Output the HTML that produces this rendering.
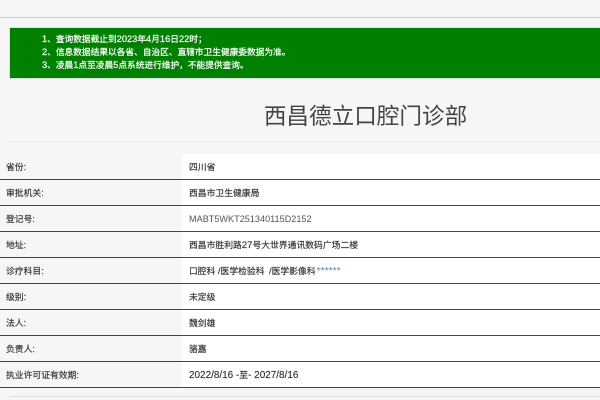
<!DOCTYPE html>
<html lang="zh">
<head>
<meta charset="utf-8">
<style>
html,body{margin:0;padding:0;width:600px;height:400px;overflow:hidden;background:#f6f6f6;}
body{position:relative;font-family:"Liberation Sans","Noto Sans CJK SC",sans-serif;color:#333;}
.abs{position:absolute;}
#top{left:0;top:17px;width:600px;height:1px;background:#ccc;}
#notice{left:9px;top:27px;width:591px;height:52px;box-sizing:border-box;background:#008000;border:1px solid #ddd;border-right:0;color:#fff;font-size:8.7px;-webkit-text-stroke:.2px #fff;}
#notice div{position:absolute;left:32px;white-space:nowrap;line-height:13px;}
#notice i{font-style:normal;font-size:9.3px;}
#title{left:0;top:100px;width:731px;text-align:center;font-size:22.6px;line-height:33px;color:#444;white-space:nowrap;}
#hr1{left:9px;top:141px;width:591px;height:1px;background:#eee;}
#white{left:182px;top:154px;width:418px;height:233px;background:#fff;}
.line{position:absolute;left:0;width:600px;height:1px;background:#1f5a3c;}
.k,.v{position:absolute;font-size:8.8px;line-height:12px;white-space:nowrap;color:#333;-webkit-text-stroke:.15px #333;}
.k{left:6px;}
.v{left:189px;}
.v i{font-style:normal;font-size:9.6px;}
.v i.d{font-size:9.95px;}
#hr2{left:9px;top:396px;width:591px;height:1px;background:#ddd;}
.v i.star{color:#4a90c8;font-size:10.3px;-webkit-text-stroke:0;margin-left:1px;}
</style>
</head>
<body>
<div class="abs" id="top"></div>
<div class="abs" id="notice">
<div style="top:5px"><i>1</i>、查询数据截止到<i>2023</i>年<i>4</i>月<i>16</i>日<i>22</i>时；</div>
<div style="top:18px"><i>2</i>、信息数据结果以各省、自治区、直辖市卫生健康委数据为准。</div>
<div style="top:31px"><i>3</i>、凌晨<i>1</i>点至凌晨<i>5</i>点系统进行维护，不能提供查询。</div>
</div>
<div class="abs" id="title">西昌德立口腔门诊部</div>
<div class="abs" id="hr1"></div>
<div class="abs" id="white"></div>

<div class="k" style="top:161px">省份:</div><div class="v" style="top:161px">四川省</div>
<div class="line" style="top:179px"></div>
<div class="k" style="top:187px">审批机关:</div><div class="v" style="top:187px">西昌市卫生健康局</div>
<div class="line" style="top:205px"></div>
<div class="k" style="top:213px">登记号:</div><div class="v" style="top:213px;color:#555;-webkit-text-stroke:0;font-size:9.13px">MABT5WKT251340115D2152</div>
<div class="line" style="top:231px"></div>
<div class="k" style="top:239px">地址:</div><div class="v" style="top:239px">西昌市胜利路<i>27</i>号大世界通讯数码广场二楼</div>
<div class="line" style="top:257px"></div>
<div class="k" style="top:265px">诊疗科目:</div><div class="v" style="top:265px">口腔科 <i>/</i>医学检验科 <i style="margin-left:2px">/</i>医学影像科<i class="star">******</i></div>
<div class="line" style="top:283px"></div>
<div class="k" style="top:291px">级别:</div><div class="v" style="top:291px">未定级</div>
<div class="line" style="top:309px"></div>
<div class="k" style="top:317px">法人:</div><div class="v" style="top:317px">魏剑雄</div>
<div class="line" style="top:335px"></div>
<div class="k" style="top:343px">负责人:</div><div class="v" style="top:343px">骆嘉</div>
<div class="line" style="top:361px"></div>
<div class="k" style="top:369px">执业许可证有效期:</div><div class="v" style="top:369px"><i class="d">2022/8/16 -</i>至<i class="d">- 2027/8/16</i></div>
<div class="line" style="top:387px"></div>
<div class="abs" id="hr2"></div>
</body>
</html>
